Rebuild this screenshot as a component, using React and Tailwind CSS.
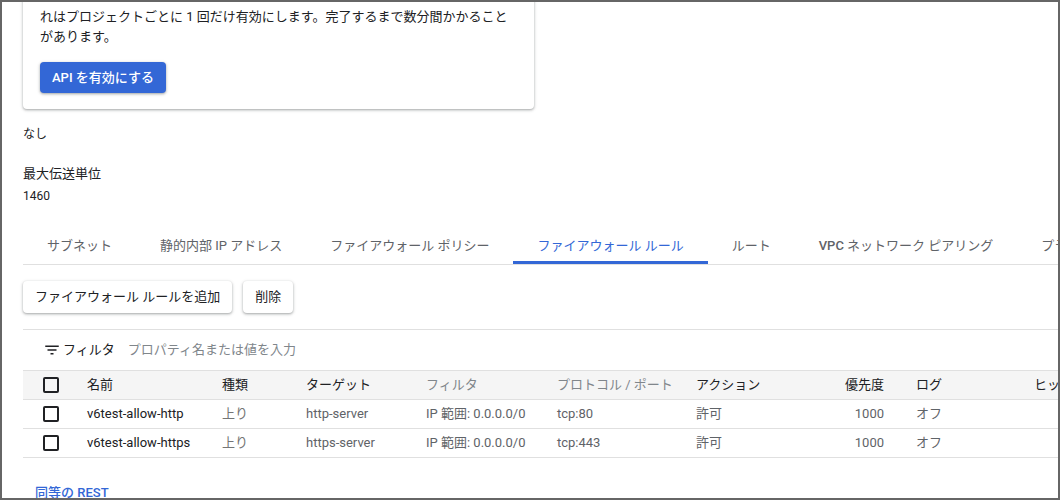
import { Fragment } from 'react';

const tabs = [
  'サブネット',
  '静的内部 IP アドレス',
  'ファイアウォール ポリシー',
  'ファイアウォール ルール',
  'ルート',
  'VPC ネットワーク ピアリング',
  'プライベート サービス接続'
];

const activeTab = 'ファイアウォール ルール';

const rules = [
  {
    name: 'v6test-allow-http',
    direction: '上り',
    target: 'http-server',
    filter: 'IP 範囲: 0.0.0.0/0',
    ports: 'tcp:80',
    action: '許可',
    priority: 1000,
    logs: 'オフ'
  },
  {
    name: 'v6test-allow-https',
    direction: '上り',
    target: 'https-server',
    filter: 'IP 範囲: 0.0.0.0/0',
    ports: 'tcp:443',
    action: '許可',
    priority: 1000,
    logs: 'オフ'
  }
];

const raised = 'shadow-[0_1px_2px_rgba(60,64,67,0.3),0_1px_3px_1px_rgba(60,64,67,0.15)]';

function Checkbox() {
  return <span className="block h-[16px] w-[16px] rounded-[2px] border-2 border-[#202124]" />;
}

function FilterIcon() {
  return (
    <svg viewBox="0 0 24 24" className="h-[18px] w-[18px] fill-[#202124]">
      <path d="M10 18h4v-2h-4v2zM3 6v2h18V6H3zm3 7h12v-2H6v2z" />
    </svg>
  );
}

function RuleRow({ rule }) {
  return (
    <div className="flex h-[29px] items-center whitespace-nowrap border-b border-[#e0e0e0] text-[13px] text-[#5f6368]">
      <div className="w-[64px] shrink-0 pl-[20px]">
        <Checkbox />
      </div>
      <div className="w-[135px] shrink-0 text-[#202124]">{rule.name}</div>
      <div className="w-[84px] shrink-0 text-[#757575]">{rule.direction}</div>
      <div className="w-[120px] shrink-0">{rule.target}</div>
      <div className="w-[131px] shrink-0">{rule.filter}</div>
      <div className="w-[139px] shrink-0">{rule.ports}</div>
      <div className="w-[104px] shrink-0">{rule.action}</div>
      <div className="w-[84px] shrink-0 text-right">{rule.priority}</div>
      <div className="w-[32px] shrink-0" />
      <div className="w-[118px] shrink-0">{rule.logs}</div>
      <div className="w-[80px] shrink-0" />
    </div>
  );
}

export default function App() {
  return (
    <div className="h-[500px] w-[1060px] overflow-hidden border-2 border-[#666666] bg-white font-['Roboto','Noto_Sans_CJK_JP',sans-serif] text-[#202124]">
      <div className="pl-[21px]">
        {/* API notice card */}
        <div className={`-mt-2 w-[511px] rounded-[4px] bg-white pb-[16px] pl-[17px] pr-4 pt-[13px] ${raised}`}>
          <p className="text-[13px] leading-[20px] text-[#202124]">
            れはプロジェクトごとに 1 回だけ有効にします。完了するまで数分間かかること
            <br />
            があります。
          </p>
          <button
            type="button"
            className={`mt-[15px] h-[31px] rounded-[4px] bg-[#3367d6] px-3 text-[13px] font-medium text-white ${raised}`}
          >
            API を有効にする
          </button>
        </div>

        <div className="mt-[15px] text-[12px] leading-[20px] text-[#202124]">なし</div>
        <div className="mt-[20px] text-[13px] leading-[20px] text-[#202124]">最大伝送単位</div>
        <div className="mt-[2px] text-[12px] leading-[20px] text-[#202124]">1460</div>

        {/* Tabs */}
        <div className="mt-[10px] flex h-[49px] whitespace-nowrap border-b border-[#e0e0e0]">
          {tabs.map((tab) => (
            <div
              key={tab}
              className={
                tab === activeTab
                  ? 'h-full shrink-0 border-b-[3px] border-[#3367d6] px-6 pt-[20px] text-[13px] leading-[20px] text-[#3367d6]'
                  : 'h-full shrink-0 px-6 pt-[20px] text-[13px] leading-[20px] text-[#5f6368]'
              }
            >
              {tab.startsWith('VPC') ? (
                <Fragment>
                  <span className="font-medium">VPC</span>
                  <span>&nbsp;ネットワーク ピアリング</span>
                </Fragment>
              ) : (
                tab
              )}
            </div>
          ))}
        </div>

        {/* Actions */}
        <div className="mt-[16px] flex gap-[11px]">
          <button
            type="button"
            className={`h-[32px] rounded-[4px] bg-white px-3 text-[13px] text-[#202124] ${raised}`}
          >
            ファイアウォール ルールを追加
          </button>
          <button
            type="button"
            className={`h-[32px] rounded-[4px] bg-white px-3 text-[13px] text-[#202124] ${raised}`}
          >
            削除
          </button>
        </div>

        {/* Firewall rules table */}
        <div className="mt-[16px] border-t border-[#e0e0e0]">
          <div className="flex h-[40px] items-center pl-[20px]">
            <FilterIcon />
            <span className="ml-[2px] text-[13px] text-[#202124]">フィルタ</span>
            <span className="ml-[13px] text-[13px] text-[#80868b]">プロパティ名または値を入力</span>
          </div>
          <div className="flex h-[30px] items-center whitespace-nowrap border-y border-[#e0e0e0] bg-[#f5f5f5] text-[13px] text-[#202124]">
            <div className="w-[64px] shrink-0 pl-[20px]">
              <Checkbox />
            </div>
            <div className="w-[135px] shrink-0">名前</div>
            <div className="w-[84px] shrink-0">種類</div>
            <div className="w-[120px] shrink-0">ターゲット</div>
            <div className="w-[131px] shrink-0 text-[#80868b]">フィルタ</div>
            <div className="w-[139px] shrink-0 text-[#80868b]">プロトコル / ポート</div>
            <div className="w-[104px] shrink-0">アクション</div>
            <div className="w-[84px] shrink-0 text-right">優先度</div>
            <div className="w-[32px] shrink-0" />
            <div className="w-[118px] shrink-0">ログ</div>
            <div className="w-[80px] shrink-0">ヒット数</div>
          </div>
          {rules.map((rule) => (
            <RuleRow key={rule.name} rule={rule} />
          ))}
        </div>

        <a className="mt-[25px] block pl-[12px] text-[13px] font-medium text-[#3367d6]">同等の REST</a>
      </div>
    </div>
  );
}
